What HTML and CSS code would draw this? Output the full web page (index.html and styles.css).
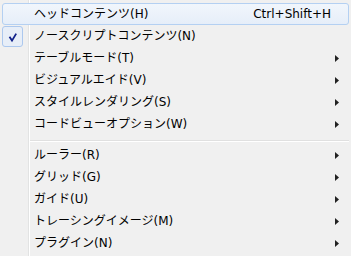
FILE: index.html
```html
<!DOCTYPE html>
<html lang="ja">
<head>
    <meta charset="UTF-8">
    <title>表示メニュー</title>
    <link rel="stylesheet" href="styles.css">
</head>
<body>
    <div class="menu">
        <div class="item active"><span class="icon"></span><span class="label">ヘッドコンテンツ(H)</span><span class="key">Ctrl+Shift+H</span><span class="sub"></span></div>
        <div class="item"><span class="icon"><span class="check"><svg width="20" height="20" viewBox="0 0 20 20"><path d="M6.5 9.8 L9 13.6 L13.2 6.6" fill="none" stroke="#10208a" stroke-width="1.8"/></svg></span></span><span class="label">ノースクリプトコンテンツ(N)</span><span class="key"></span><span class="sub"></span></div>
        <div class="item"><span class="icon"></span><span class="label">テーブルモード(T)</span><span class="key"></span><span class="sub"><svg class="arrow" width="4" height="7"><polygon points="0,0 4,3.5 0,7"/></svg></span></div>
        <div class="item"><span class="icon"></span><span class="label">ビジュアルエイド(V)</span><span class="key"></span><span class="sub"><svg class="arrow" width="4" height="7"><polygon points="0,0 4,3.5 0,7"/></svg></span></div>
        <div class="item"><span class="icon"></span><span class="label">スタイルレンダリング(S)</span><span class="key"></span><span class="sub"><svg class="arrow" width="4" height="7"><polygon points="0,0 4,3.5 0,7"/></svg></span></div>
        <div class="item"><span class="icon"></span><span class="label">コードビューオプション(W)</span><span class="key"></span><span class="sub"><svg class="arrow" width="4" height="7"><polygon points="0,0 4,3.5 0,7"/></svg></span></div>
        <div class="sep"></div>
        <div class="item"><span class="icon"></span><span class="label">ルーラー(R)</span><span class="key"></span><span class="sub"><svg class="arrow" width="4" height="7"><polygon points="0,0 4,3.5 0,7"/></svg></span></div>
        <div class="item"><span class="icon"></span><span class="label">グリッド(G)</span><span class="key"></span><span class="sub"><svg class="arrow" width="4" height="7"><polygon points="0,0 4,3.5 0,7"/></svg></span></div>
        <div class="item"><span class="icon"></span><span class="label">ガイド(U)</span><span class="key"></span><span class="sub"><svg class="arrow" width="4" height="7"><polygon points="0,0 4,3.5 0,7"/></svg></span></div>
        <div class="item"><span class="icon"></span><span class="label">トレーシングイメージ(M)</span><span class="key"></span><span class="sub"><svg class="arrow" width="4" height="7"><polygon points="0,0 4,3.5 0,7"/></svg></span></div>
        <div class="item"><span class="icon"></span><span class="label">プラグイン(N)</span><span class="key"></span><span class="sub"><svg class="arrow" width="4" height="7"><polygon points="0,0 4,3.5 0,7"/></svg></span></div>
    </div>
</body>
</html>
```

FILE: styles.css
```css
body { margin: 0; background: #f0f0f0; font-family: "DejaVu Sans", "Noto Sans CJK JP", sans-serif; font-size: 12px; color: #000; }
.menu { width: 351px; height: 256px; box-sizing: border-box; padding: 3px 2px 0 2px; background: linear-gradient(to right, #f0f0f0 28px, #e2e3e3 28px, #e2e3e3 29px, #fff 29px, #fff 30px, #f0f0f0 30px); }
.item { display: grid; grid-template-columns: 26px 1fr auto 17px; align-items: center; height: 22px; box-sizing: border-box; border: 1px solid transparent; border-radius: 3px; }
.item.active { border-color: #b4d0f2; background: linear-gradient(#f1f6fc, #e6eef9); }
.icon { display: flex; height: 20px; margin-left: -1px; }
.check { display: block; width: 21px; height: 21px; box-sizing: border-box; margin-top: 0; border: 1px solid #acc8ee; border-radius: 3px; background: #e7eef8; }
.check svg { display: block; margin: 0; }
.label { padding-left: 5px; white-space: nowrap; line-height: 20px; }
.key { line-height: 20px; white-space: nowrap; }
.sub { display: flex; align-items: center; padding-left: 4px; }
.arrow { display: block; fill: #222; }
.sep { height: 9px; box-sizing: border-box; margin-left: 28px; padding-top: 5px; }
.sep::before { content: ""; display: block; border-top: 1px solid #e0e0e0; border-bottom: 1px solid #fff; }
```
